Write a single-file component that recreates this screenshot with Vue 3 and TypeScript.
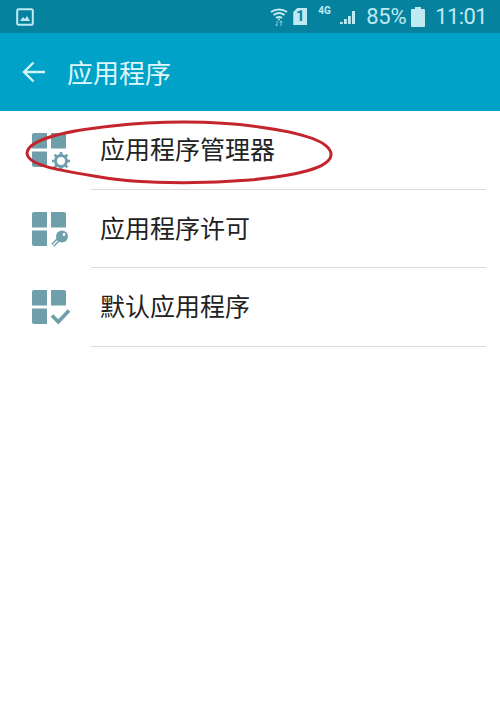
<script setup lang="ts">
const rows = [
  { label: '应用程序管理器', badge: 'gear' },
  { label: '应用程序许可', badge: 'key' },
  { label: '默认应用程序', badge: 'check' },
]
</script>

<template>
  <div class="page">
    <div class="status">
      <svg class="pic" viewBox="0 0 18 18">
        <rect x="1.2" y="1.2" width="15.6" height="15.6" rx="1.5" fill="none" stroke="#bfeaf2" stroke-width="2" />
        <path d="M4 13l3-4 2 2 2-3 3 5z" fill="#bfeaf2" />
      </svg>
      <div class="status-right">
        <svg class="wifi" viewBox="0 0 18 18" fill="none" stroke="#bfeaf2" stroke-width="2">
          <path d="M1 4C5.500 0.500 12.500 0.500 17 4" />
          <path d="M3.500 7C7 4.500 11 4.500 14.500 7" />
          <path d="M6 10C8 8.600 10 8.600 12 10" />
          <circle cx="9" cy="11.500" r="1" fill="#bfeaf2" stroke="none" />
          <path d="M7 13v5M5.500 16.500L7 18M11 18v-5M9.500 14.500L11 13M12.500 14.500L11 13" stroke-width="1" opacity="0.7" />
        </svg>
        <div class="sim">1</div>
        <span class="net">4G</span>
        <svg class="signal" viewBox="0 0 15 13" fill="#bfeaf2">
          <path d="M0 11h2.800v2H0zM4 8h2.800v5H4zM8 5h2.800v8H8zM12 0h3v13h-3z" />
        </svg>
        <span class="pct">85%</span>
        <svg class="batt" viewBox="0 0 14 20" fill="#bfeaf2">
          <path d="M4 0h6v2h3a1 1 0 0 1 1 1v16a1 1 0 0 1-1 1H1a1 1 0 0 1-1-1V3a1 1 0 0 1 1-1h3z" />
        </svg>
        <span class="time">11:01</span>
      </div>
    </div>
    <div class="header">
      <svg class="back" viewBox="0 0 24 22" fill="none" stroke="#cdf4fa" stroke-width="2.400">
        <path d="M23 11H2M11.500 1.500L2 11l9.500 9.500" />
      </svg>
      <span class="title">应用程序</span>
    </div>
    <ul class="list">
      <li v-for="row in rows" :key="row.label" class="row">
        <svg class="icon" viewBox="0 0 34 34">
          <g fill="#6f9faa">
            <path d="M2 0h13v15.500H0V2a2 2 0 0 1 2-2z" />
            <path d="M19 0h13a2 2 0 0 1 2 2v13.500H19z" />
            <path d="M0 18.500h15V34H2a2 2 0 0 1-2-2z" />
          </g>
          <g v-if="row.badge === 'gear'" fill="none" stroke="#6f9faa">
            <circle cx="29" cy="28" r="5.500" stroke-width="3" />
            <path d="M29 19v4M29 33v4M20 28h4M34 28h4M22.600 21.600l2.800 2.800M32.600 31.600l2.800 2.800M35.400 21.600l-2.800 2.800M25.400 31.600l-2.800 2.800" stroke-width="2.600" />
          </g>
          <g v-else-if="row.badge === 'key'">
            <path d="M26.500 27.500L20.800 33.200" fill="none" stroke="#6f9faa" stroke-width="4.200" />
            <path d="M25.500 28.500L21 33" fill="none" stroke="#fff" stroke-width="1.300" />
            <circle cx="30" cy="24.500" r="6" fill="#6f9faa" />
            <circle cx="32" cy="22.500" r="1.400" fill="#fff" />
          </g>
          <path v-else d="M20 25.500l6.300 6.300L37 20.500" fill="none" stroke="#6f9faa" stroke-width="3.600" />
        </svg>
        <div class="label"><span>{{ row.label }}</span></div>
      </li>
    </ul>
    <svg class="circle" viewBox="0 0 310 68" fill="none">
      <path
        d="M3 35C4 22 40 13 88 8 130 3 190 2 235 9 280 15 306 24 307 36 308 50 270 58 226 62 176 66 110 66 70 58 34 52 3 47 3 35Z"
        stroke="#c4242c"
        stroke-width="3"
      />
    </svg>
  </div>
</template>

<style>
html, body { margin: 0; background: #fff; }
</style>

<style scoped>
.page {
  position: relative;
  width: 500px;
  height: 711px;
  overflow: hidden;
  background: #fff;
  font-family: "Liberation Sans", "Noto Sans CJK SC", sans-serif;
}
.status {
  height: 33px;
  background: #06829e;
  display: flex;
  align-items: center;
  justify-content: space-between;
  padding: 0 13px 0 16px;
  color: #bfeaf2;
  font-family: Roboto, sans-serif;
}
.pic { width: 18px; height: 18px; }
.status-right { display: flex; align-items: center; }
.wifi { width: 18px; height: 18px; margin-right: 5px; overflow: visible; }
.sim {
  width: 14px;
  height: 17px;
  background: #bfeaf2;
  color: #06829e;
  font: bold 15px/17px Roboto, sans-serif;
  text-align: center;
  clip-path: polygon(4px 0, 100% 0, 100% 100%, 0 100%, 0 4px);
  margin-right: 11px;
}
.net { font-size: 10px; font-weight: bold; margin: -12px 8px 0 0; width: 14px; }
.signal { width: 15px; height: 13px; margin-right: 11px; margin-top: 1px; }
.pct { font-size: 22px; margin-right: 5px; letter-spacing: -0.3px; }
.batt { width: 14px; height: 20px; margin-right: 10px; }
.time { font-size: 22px; letter-spacing: -0.6px; }
.header {
  height: 78px;
  background: #00a2c8;
  display: flex;
  align-items: center;
  padding-left: 22px;
}
.back { width: 24px; height: 22px; margin-right: 21px; }
.title { font-size: 26px; color: #dff7fb; padding-bottom: 1px; }
.list { list-style: none; margin: 0; padding: 0; }
.row {
  height: 78.500px;
  display: flex;
  align-items: center;
  padding-left: 32px;
}
.icon { width: 34px; height: 34px; margin-right: 25px; overflow: visible; flex: none; }
.label {
  flex: none;
  width: 395px;
  height: 100%;
  box-sizing: border-box;
  border-bottom: 1px solid #dcdcdc;
  display: flex;
  align-items: center;
  padding: 0 0 3px 9px;
  font-size: 25px;
  color: #222;
}
.circle {
  position: absolute;
  left: 24px;
  top: 118px;
  width: 310px;
  height: 68px;
}
</style>
